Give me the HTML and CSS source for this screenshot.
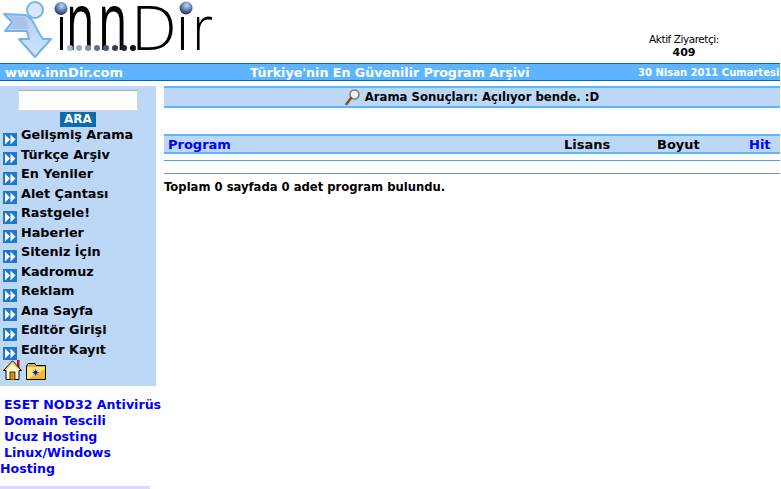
FILE: index.html
```html
<!DOCTYPE html>
<html lang="tr">
<head>
<meta charset="utf-8">
<title>innDir</title>
<link rel="stylesheet" href="styles.css">
</head>
<body>
<header class="top">
  <svg class="logo" width="215" height="60" viewBox="0 0 215 60">
    <defs>
      <radialGradient id="ball" cx="0.55" cy="0.3" r="0.75"><stop offset="0" stop-color="#c9d6e8"/><stop offset="0.5" stop-color="#5f80b8"/><stop offset="1" stop-color="#16233f"/></radialGradient>
      <linearGradient id="arrow" x1="0" y1="0" x2="0" y2="1"><stop offset="0" stop-color="#b4cdf0"/><stop offset="1" stop-color="#cfe6fb"/></linearGradient>
    </defs>
    <circle cx="35" cy="10" r="8" fill="#d8e8fa" stroke="#72b4ea" stroke-width="2"/>
    <path d="M4 14 L26 15 L32 20 L39 33 L43 39 L51 39 L35 57 L19 39 L29 39 L27 31 L5 31 L12 22 Z" fill="url(#arrow)" stroke="#72b4ea" stroke-width="2" stroke-linejoin="round"/>
    <path d="M9 16 L25 17 L29 29 L9 29 L14 22 Z" fill="#a9c2ea"/>
    <text class="lg-small" transform="translate(54.4 50)">i</text>
    <text class="lg-big" transform="translate(66 50) scale(.58 1)">n</text>
    <text class="lg-big" transform="translate(98 50) scale(.6 1)">n</text>
    <text class="lg-cap" transform="translate(131 50) scale(1.08 1)">D</text>
    <text class="lg-small" transform="translate(175.4 50)">i</text>
    <text class="lg-small" transform="translate(192.2 50) scale(.86 1)">r</text>
    <circle cx="61" cy="8.5" r="6.5" fill="url(#ball)"/>
    <circle cx="186" cy="8" r="6.5" fill="url(#ball)"/>
    <circle cx="70" cy="48" r="3" fill="#9db9dc"/>
    <circle cx="79" cy="48" r="3" fill="#8eaacd"/>
    <circle cx="88" cy="48" r="3" fill="#7c92b4"/>
    <circle cx="97" cy="48" r="3" fill="#5f7292"/>
    <circle cx="106" cy="48" r="3" fill="#4a5a78"/>
    <circle cx="115" cy="48" r="3" fill="#333f55"/>
    <circle cx="124" cy="48" r="3" fill="#1e2532"/>
    <circle cx="133" cy="48" r="3" fill="#0c0f14"/>
  </svg>
  <div class="visitors">
    <div class="visitors-label">Aktif Ziyaretçi:</div>
    <div class="visitors-count">409</div>
  </div>
</header>
<div class="bar">
  <span class="bar-site">www.innDir.com</span>
  <span class="bar-slogan">Türkiye'nin En Güvenilir Program Arşivi</span>
  <span class="bar-date">30 Nisan 2011 Cumartesi</span>
</div>
<div class="page">
  <aside class="side">
    <div class="side-panel">
      <div class="search-box"></div>
      <div class="search-btn">ARA</div>
      <ul class="menu">
        <li><svg class="ico" viewBox="0 0 14 13"><rect width="14" height="13" fill="#1f78c8"/><path d="M2 1.5 L7 6.5 L2 11.5Z M7.5 1.5 L12.5 6.5 L7.5 11.5Z" fill="#fff"/></svg><span>Gelişmiş Arama</span></li>
        <li><svg class="ico" viewBox="0 0 14 13"><rect width="14" height="13" fill="#1f78c8"/><path d="M2 1.5 L7 6.5 L2 11.5Z M7.5 1.5 L12.5 6.5 L7.5 11.5Z" fill="#fff"/></svg><span>Türkçe Arşiv</span></li>
        <li><svg class="ico" viewBox="0 0 14 13"><rect width="14" height="13" fill="#1f78c8"/><path d="M2 1.5 L7 6.5 L2 11.5Z M7.5 1.5 L12.5 6.5 L7.5 11.5Z" fill="#fff"/></svg><span>En Yeniler</span></li>
        <li><svg class="ico" viewBox="0 0 14 13"><rect width="14" height="13" fill="#1f78c8"/><path d="M2 1.5 L7 6.5 L2 11.5Z M7.5 1.5 L12.5 6.5 L7.5 11.5Z" fill="#fff"/></svg><span>Alet Çantası</span></li>
        <li><svg class="ico" viewBox="0 0 14 13"><rect width="14" height="13" fill="#1f78c8"/><path d="M2 1.5 L7 6.5 L2 11.5Z M7.5 1.5 L12.5 6.5 L7.5 11.5Z" fill="#fff"/></svg><span>Rastgele!</span></li>
        <li><svg class="ico" viewBox="0 0 14 13"><rect width="14" height="13" fill="#1f78c8"/><path d="M2 1.5 L7 6.5 L2 11.5Z M7.5 1.5 L12.5 6.5 L7.5 11.5Z" fill="#fff"/></svg><span>Haberler</span></li>
        <li><svg class="ico" viewBox="0 0 14 13"><rect width="14" height="13" fill="#1f78c8"/><path d="M2 1.5 L7 6.5 L2 11.5Z M7.5 1.5 L12.5 6.5 L7.5 11.5Z" fill="#fff"/></svg><span>Siteniz İçin</span></li>
        <li><svg class="ico" viewBox="0 0 14 13"><rect width="14" height="13" fill="#1f78c8"/><path d="M2 1.5 L7 6.5 L2 11.5Z M7.5 1.5 L12.5 6.5 L7.5 11.5Z" fill="#fff"/></svg><span>Kadromuz</span></li>
        <li><svg class="ico" viewBox="0 0 14 13"><rect width="14" height="13" fill="#1f78c8"/><path d="M2 1.5 L7 6.5 L2 11.5Z M7.5 1.5 L12.5 6.5 L7.5 11.5Z" fill="#fff"/></svg><span>Reklam</span></li>
        <li><svg class="ico" viewBox="0 0 14 13"><rect width="14" height="13" fill="#1f78c8"/><path d="M2 1.5 L7 6.5 L2 11.5Z M7.5 1.5 L12.5 6.5 L7.5 11.5Z" fill="#fff"/></svg><span>Ana Sayfa</span></li>
        <li><svg class="ico" viewBox="0 0 14 13"><rect width="14" height="13" fill="#1f78c8"/><path d="M2 1.5 L7 6.5 L2 11.5Z M7.5 1.5 L12.5 6.5 L7.5 11.5Z" fill="#fff"/></svg><span>Editör Girişi</span></li>
        <li><svg class="ico" viewBox="0 0 14 13"><rect width="14" height="13" fill="#1f78c8"/><path d="M2 1.5 L7 6.5 L2 11.5Z M7.5 1.5 L12.5 6.5 L7.5 11.5Z" fill="#fff"/></svg><span>Editör Kayıt</span></li>
      </ul>
      <div class="shortcuts">
        <svg width="19" height="20" viewBox="0 0 19 20"><rect x="14" y="0" width="2.5" height="8" fill="#a02030"/><path d="M9.5 0.8 L18.5 10.5 L16 10.5 L16 19.5 L3 19.5 L3 10.5 L0.5 10.5Z" fill="#fff8d0" stroke="#000"/><path d="M9.5 1.5 L17 9.8 L16 10 L9.5 3.5 L3 10 L2 9.8Z" fill="#f0c040"/><rect x="7" y="12" width="5" height="8" fill="#e08a10" stroke="#000" stroke-width="0.7"/></svg>
        <svg width="20" height="17" viewBox="0 0 20 17"><path d="M0.5 3 L2 0.5 L9 0.5 L10 2.5 L19.5 2.5 L19.5 16.5 L0.5 16.5Z" fill="#c8b060" stroke="#000"/><path d="M1 4 H19 V16 H1Z" fill="#ffe36a"/><path d="M2 16 L19 16 L19 6Z" fill="#d8a418" opacity=".65"/><path d="M9.5 6.5 V12.5 M6.5 9.5 H12.5 M7.5 7.5 L11.5 11.5 M11.5 7.5 L7.5 11.5" stroke="#1a1ae0" stroke-width="1"/></svg>
      </div>
    </div>
    <div class="links">
      <a class="link">ESET NOD32 Antivirüs</a>
      <a class="link">Domain Tescili</a>
      <a class="link">Ucuz Hosting</a>
      <a class="link">Linux/Windows Hosting</a>
    </div>
    <div class="side-foot"></div>
  </aside>
  <main class="main">
    <div class="title">
      <svg width="15" height="17" viewBox="0 0 15 17"><circle cx="9.5" cy="5.5" r="4.5" fill="#eef3f6" stroke="#7d7f7a" stroke-width="1.6"/><path d="M6 9 L1.5 15" stroke="#7a5a20" stroke-width="2.6" stroke-linecap="round"/></svg>
      <span>Arama Sonuçları: Açılıyor bende. :D</span>
    </div>
    <div class="thead">
      <a class="th-program">Program</a>
      <span class="th-lisans">Lisans</span>
      <span class="th-boyut">Boyut</span>
      <a class="th-hit">Hit</a>
    </div>
    <div class="empty-row"></div>
    <p class="summary">Toplam 0 sayfada 0 adet program bulundu.</p>
  </main>
</div>
</body>
</html>
```
FILE: styles.css
```css
* { box-sizing: border-box; }
html, body { margin: 0; padding: 0; }
body { width: 781px; height: 489px; overflow: hidden; background: #fff; color: #000; font-family: "DejaVu Sans", Verdana, sans-serif; }
.top { height: 63px; display: flex; justify-content: space-between; }
.logo { display: block; }
.lg-small, .lg-big, .lg-cap { font-family: "Open Sans", sans-serif; fill: #000; }
.lg-small { font-size: 62px; font-weight: 300; }
.lg-big { font-size: 80px; font-weight: 400; }
.lg-cap { font-size: 60px; font-weight: 300; }
.visitors { width: 70px; margin: 33px 62px 0 0; text-align: center; font-size: 11px; line-height: 13px; }
.visitors-label { font-size: 10.5px; white-space: nowrap; letter-spacing: -0.45px; }
.visitors-count { font-weight: 700; font-size: 11px; }
.bar { width: 780px; height: 18px; background: #5eb5ff; border-top: 1px solid #0b6aa5; border-bottom: 1px solid #0b6aa5; display: flex; align-items: center; color: #fff; font-weight: 700; white-space: nowrap; }
.bar-site { width: 250px; padding-left: 5px; font-size: 13px; }
.bar-slogan { width: 388px; font-size: 12.65px; }
.bar-date { width: 142px; font-size: 10px; text-align: right; padding-right: 3px; }
.page { display: flex; padding-top: 5px; }
.side { width: 164px; flex: none; }
.side-panel { width: 156px; height: 300px; background: #bdd7f7; padding-top: 4px; }
.search-box { width: 120px; height: 21px; margin-left: 18px; background: #fff; border: 1px solid #d0d8e2; border-top-color: #a8b0bc; border-radius: 1px; }
.search-btn { width: 36px; height: 15px; margin: 1px 0 0 60px; background: #0b6cb0; color: #fff; font-size: 12px; font-weight: 700; line-height: 15px; text-align: center; }
.menu { list-style: none; margin: 0; padding: 0; }
.menu li { height: 19.5px; display: flex; font-size: 12.8px; font-weight: 700; line-height: 16px; white-space: nowrap; }
.menu span { margin-left: 4px; }
.ico { width: 14px; height: 13px; margin: 5.6px 0 0 3px; flex: none; }
.shortcuts { display: flex; align-items: flex-end; gap: 4px; margin-top: -1px; padding-left: 3px; }
.links { width: 164px; margin-top: 11px; }
.link { display: block; color: #0000ff; font-size: 12.6px; font-weight: 700; line-height: 16px; text-indent: 4px; }
.side-foot { width: 150px; height: 3px; margin-top: 9px; background: #dcd8ff; }
.main { width: 616px; font-size: 11.7px; font-weight: 700; }
.title { height: 22px; background: #bdd7f7; border-top: 2px solid #5eb5ff; border-bottom: 2px solid #5eb5ff; display: flex; justify-content: center; align-items: center; gap: 5px; white-space: nowrap; }
.thead { height: 20px; margin-top: 26px; background: #bdd7f7; border-top: 2px solid #5eb5ff; border-bottom: 2px solid #5eb5ff; display: flex; align-items: center; font-size: 13px; }
.th-program { width: 400px; padding-left: 4px; color: #0000ff; }
.th-lisans { width: 93px; }
.th-boyut { width: 92px; }
.th-hit { color: #0000ff; }
.empty-row { height: 14px; margin-top: 6px; border-top: 1px solid #5c9fe0; border-bottom: 1px solid #6a9bd0; }
.summary { margin: 6px 0 0; font-size: 11.6px; line-height: 14px; }
```
